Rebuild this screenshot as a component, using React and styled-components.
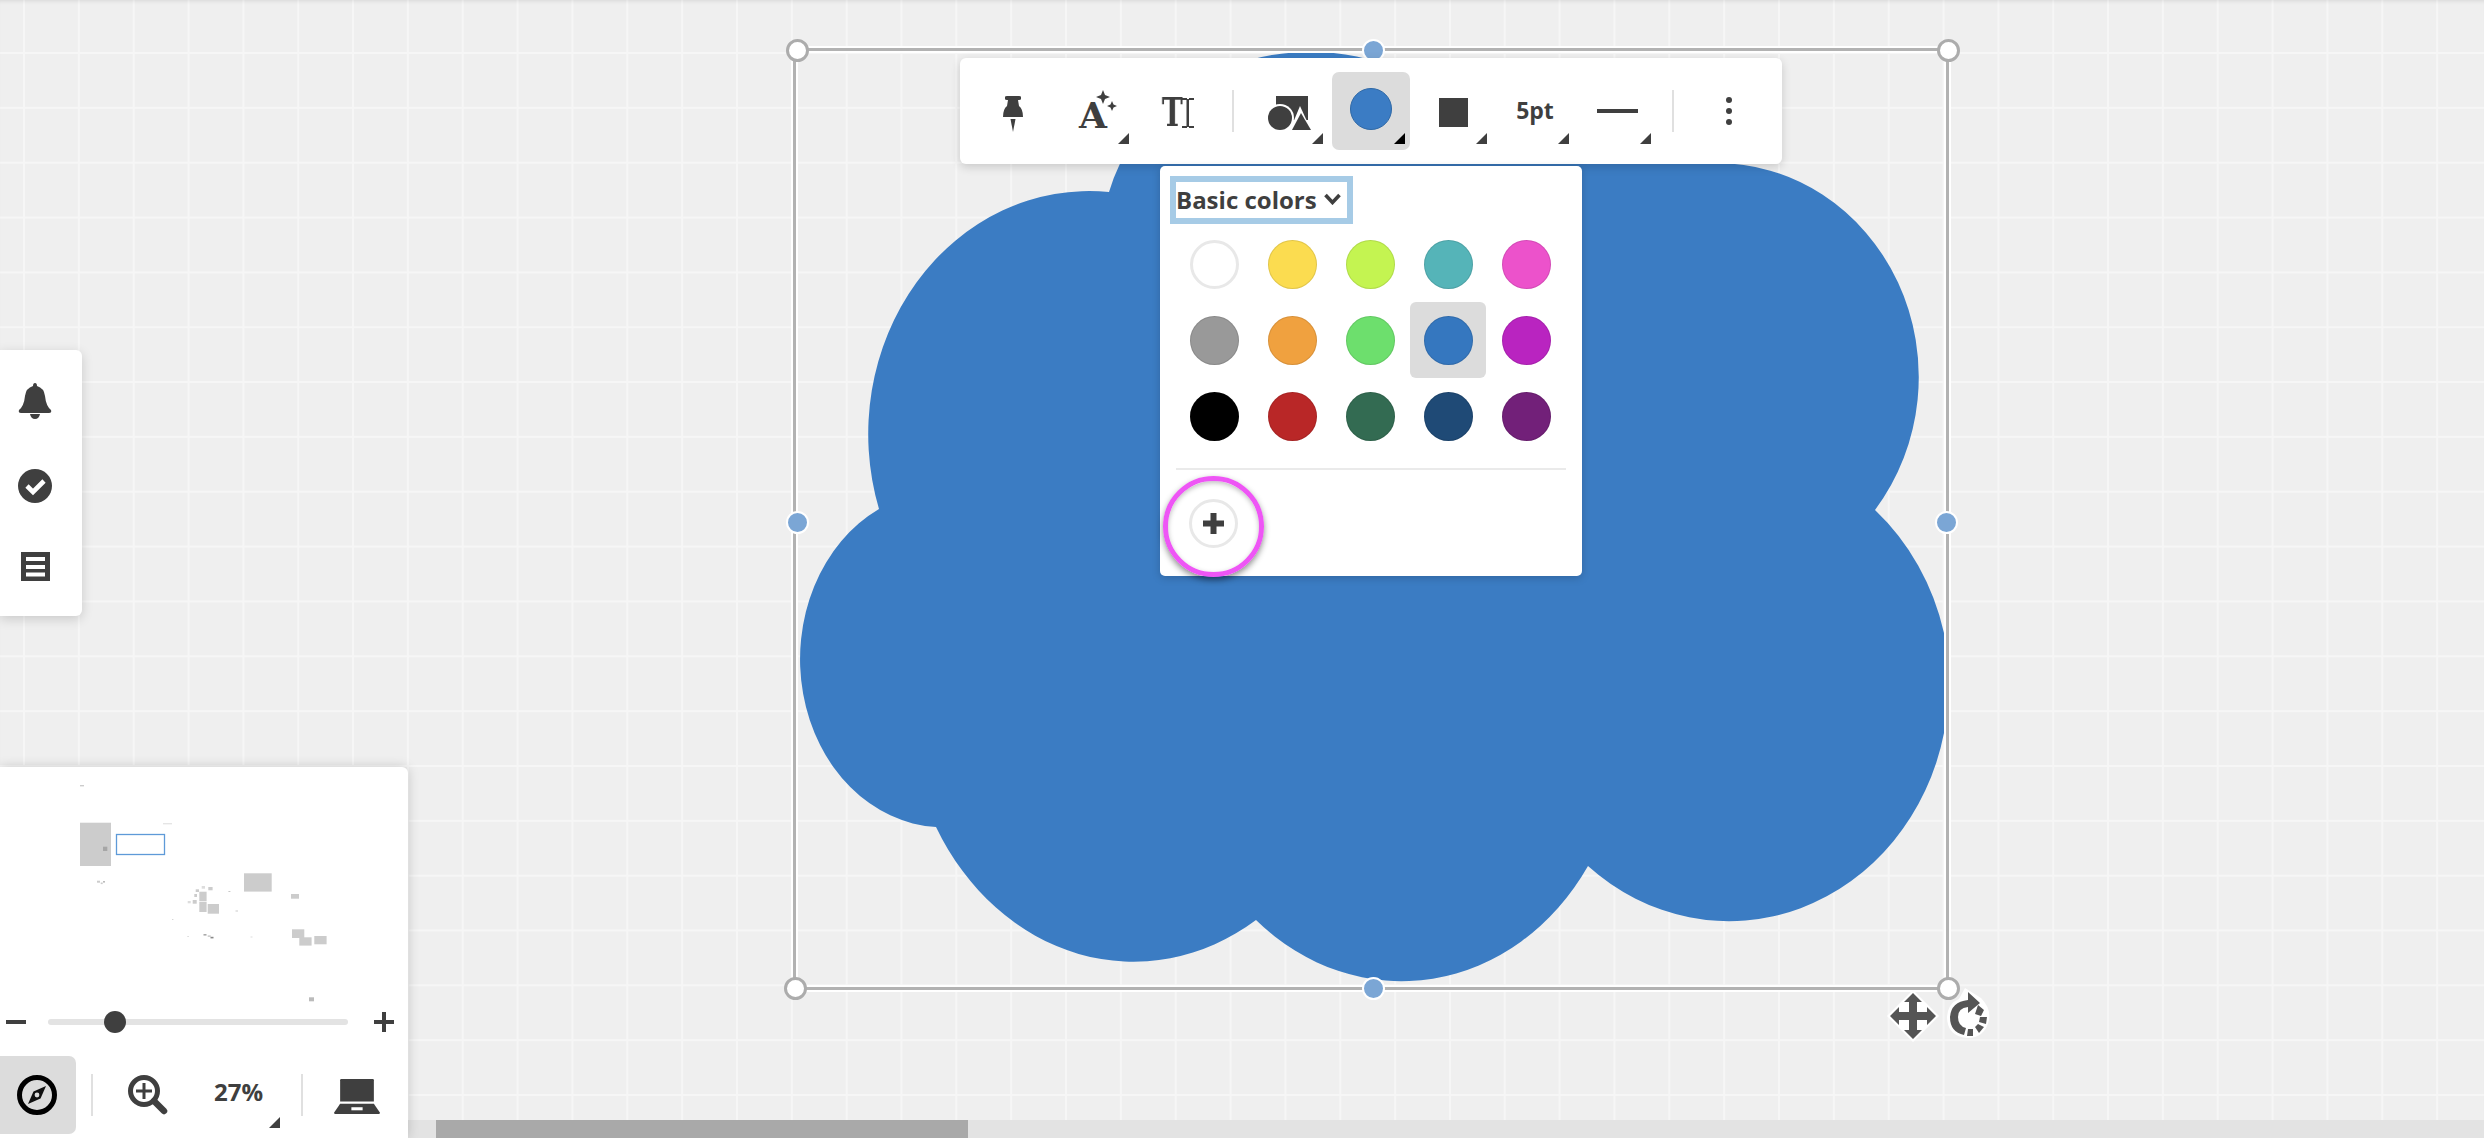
import React from 'react';
import styled, { createGlobalStyle } from 'styled-components';

const Global = createGlobalStyle`
  html, body { margin: 0; padding: 0; height: 100%; overflow: hidden; background: #efefef; }
  #root { height: 100%; }
  * { box-sizing: border-box; }
`;

const Page = styled.div`
  width: 2484px; height: 1138px; display: flex; flex-direction: column; overflow: hidden;
  font-family: "Open Sans", "Noto Sans", sans-serif; color: #3f3f3f;
`;
const Canvas = styled.main`
  position: relative; flex: 1; overflow: hidden; background-color: #efefef;
  background-image:
    linear-gradient(to right, #f6f6f6 1.6px, transparent 1.6px),
    linear-gradient(to bottom, #f6f6f6 1.6px, transparent 1.6px);
  background-size: 54.85px 54.85px;
  background-position: 23px 52px;
  box-shadow: inset 0 4px 4px -3px rgba(0,0,0,.1);
`;
const ScrollTrack = styled.div`
  height: 18px; flex: none; background: #e3e3e3; padding-left: 436px;
`;
const ScrollThumb = styled.div`
  width: 532px; height: 100%; background: #a9a9a9;
`;

const CloudArt = styled.svg`
  position: absolute; left: 0; top: 0; width: 2484px; height: 1120px;
`;
const SelectionFrame = styled.div`
  position: absolute; left: 793px; top: 48px; width: 1156px; height: 942px;
  border: 3px solid #b2b2b2;
  box-shadow: 0 0 0 2px #fff, inset 0 0 0 2px #fff;
`;
const CornerHandle = styled.div`
  position: absolute; width: 23px; height: 23px; margin: -11.5px 0 0 -11.5px; border-radius: 50%;
  background: #fff; border: 3px solid #acacac;
  left: ${p => p.$x}px; top: ${p => p.$y}px;
`;
const EdgeHandle = styled.div`
  position: absolute; width: 23px; height: 23px; margin: -11.5px 0 0 -11.5px; border-radius: 50%;
  background: #7ba6d5; border: 2.5px solid #fff;
  left: ${p => p.$x}px; top: ${p => p.$y}px;
`;
const FreeIcon = styled.svg`
  position: absolute; left: ${p => p.$x}px; top: ${p => p.$y}px;
`;

const Toolbar = styled.div`
  position: absolute; left: 960px; top: 58px; width: 822px; height: 106px;
  display: flex; align-items: center; padding-left: 14px;
  background: #fff; border-radius: 6px; box-shadow: 0 3px 10px rgba(0,0,0,.16);
`;
const ToolGroup = styled.div`
  display: flex; gap: 4px;
`;
const ToolButton = styled.div`
  position: relative; width: 78px; height: 78px; border-radius: 7px; flex: none;
  display: flex; align-items: center; justify-content: center;
  background: ${p => p.$active ? '#dcdcdc' : 'transparent'};
`;
const Corner = styled.span`
  position: absolute; right: ${p => p.$right ?? 5}px; bottom: ${p => p.$bottom ?? 6}px; width: 0; height: 0;
  border-style: solid; border-width: 0 0 11px 11px;
  border-color: transparent transparent ${p => p.$dark ? '#000' : '#3f3f3f'} transparent;
`;
const ToolSep = styled.div`
  width: 2px; height: 42px; background: #e0e0e0; flex: none; margin: 0 16px;
`;
const LetterA = styled.span`
  font-family: "DejaVu Serif", serif; font-weight: 700; font-size: 36px; line-height: 1;
  color: #3f3f3f; margin: 0 8px 0 0; transform: translate(2px, 4px);
`;
const Spark = styled.svg`
  position: absolute; left: 40px; top: 18px;
`;
const TextTool = styled.div`
  display: flex; align-items: center; margin-top: 3px;
`;
const LetterT = styled.span`
  font-family: "DejaVu Serif", serif; font-weight: 700; font-size: 39px; line-height: 1;
  color: #3f3f3f; display: inline-block; width: 20px; text-align: center; transform: scaleX(.72);
  will-change: transform;
`;
const FillDot = styled.div`
  width: 42px; height: 42px; border-radius: 50%; background: #3b7cc4; border: 1.5px solid #2e68a6;
  margin-top: -4px;
`;
const SquareIcon = styled.div`
  width: 29px; height: 29px; background: #3f3f3f; margin-top: 2px;
`;
const PtLabel = styled.span`
  font-size: 23px; font-weight: 700; color: #3f3f3f; margin-top: -2px;
`;
const LineIcon = styled.div`
  width: 41px; height: 4px; background: #3f3f3f; margin-top: 0;
`;
const MoreDots = styled.div`
  display: flex; flex-direction: column; gap: 5px;
`;
const MoreDot = styled.i`
  display: block; width: 6px; height: 6px; border-radius: 50%; background: #3f3f3f;
`;

const ColorPopup = styled.div`
  position: absolute; left: 1160px; top: 166px; width: 422px; height: 410px;
  padding: 10px 16px 0 10px; background: #fff; border-radius: 5px;
  box-shadow: 0 2px 8px rgba(0,0,0,.18);
  display: flex; flex-direction: column; align-items: flex-start;
`;
const PaletteSelect = styled.div`
  width: 183px; height: 48px; border: 6px solid #a6cbe6; display: flex; align-items: center; gap: 7px;
  padding: 0 0 2px 0; font-size: 24px; font-weight: 700; color: #3f3f3f; white-space: nowrap;
`;
const SwatchGrid = styled.div`
  display: grid; grid-template-columns: repeat(5, 76px); grid-auto-rows: 76px; column-gap: 2px;
  margin: 2px 0 0 6px;
`;
const SwatchCell = styled.div`
  display: flex; align-items: center; justify-content: center; border-radius: 6px;
  background: ${p => p.$selected ? '#dcdcdc' : 'transparent'};
`;
const Swatch = styled.div`
  width: 49px; height: 49px; border-radius: 50%; background: ${p => p.$color};
  border: ${p => p.$light ? '3px solid #e8e8e8' : '1px solid rgba(0,0,0,.1)'};
`;
const PopupDivider = styled.div`
  width: 390px; height: 2px; background: #eaeaea; margin: 14px 0 0 6px;
`;
const AddColor = styled.div`
  width: 49px; height: 49px; border-radius: 50%; border: 3px solid #e8e8e8; margin: 29px 0 0 19px;
  display: flex; align-items: center; justify-content: center; flex: none;
`;
const PinkRing = styled.div`
  position: absolute; left: 3px; top: 310px; width: 101px; height: 101px; border-radius: 50%;
  border: 5px solid #ee55f5; box-shadow: 0 3px 6px rgba(0,0,0,.45), inset 0 2px 5px rgba(0,0,0,.25);
`;

const SidePanel = styled.aside`
  position: absolute; left: 0; top: 350px; width: 82px; height: 266px; background: #fff;
  border-radius: 0 6px 6px 0; box-shadow: 0 3px 12px rgba(0,0,0,.16);
  display: flex; flex-direction: column; align-items: center; justify-content: space-between;
  padding: 33px 12px 35px 0;
`;

const MapPanel = styled.section`
  position: absolute; left: 0; top: 767px; width: 408px; height: 371px; background: #fff;
  border-radius: 0 6px 0 0; box-shadow: 0 0 12px rgba(0,0,0,.18); z-index: 2;
  display: flex; flex-direction: column;
`;
const MiniMap = styled.svg`
  display: block; width: 408px; height: 240px; flex: none;
`;
const SliderRow = styled.div`
  height: 30px; display: flex; align-items: center; padding: 0 14px 0 6px; gap: 22px; flex: none;
`;
const MinusMark = styled.div`
  width: 20px; height: 4px; background: #3f3f3f; flex: none;
`;
const SliderTrack = styled.div`
  position: relative; flex: none; width: 300px; height: 6px; border-radius: 3px; background: #e3e3e3;
`;
const SliderKnob = styled.div`
  position: absolute; left: ${p => p.$pos}px; top: -8px; width: 22px; height: 22px; border-radius: 50%; background: #3f3f3f;
`;
const PlusSlot = styled.div`
  display: flex; margin-left: 4px;
`;
const ViewRow = styled.div`
  display: flex; align-items: center; height: 78px; margin-top: 19px; flex: none;
`;
const CompassButton = styled.div`
  width: 76px; height: 78px; background: #dcdcdc; border-radius: 0 7px 7px 0; padding-right: 2px;
  display: flex; align-items: center; justify-content: center; flex: none;
`;
const ViewSep = styled.div`
  width: 2px; height: 42px; background: #e0e0e0; flex: none; margin-left: ${p => p.$ml}px;
`;
const ZoomSlot = styled.div`
  flex: none; margin-left: ${p => p.$ml}px; margin-top: ${p => p.$mt ?? 0}px; display: flex;
`;
const ZoomValue = styled.div`
  position: relative; margin-left: 46px; width: 66px; height: 60px; flex: none;
  font-size: 24px; font-weight: 700; color: #3f3f3f; line-height: 54px;
`;

const Plus = ({ size = 21, w = 6 }) => (
  <svg width={size} height={size} viewBox="0 0 20 20" fill="#3f3f3f">
    <rect x={10 - w * 10 / size} y="0" width={w * 20 / size} height="20" />
    <rect x="0" y={10 - w * 10 / size} width="20" height={w * 20 / size} />
  </svg>
);

const SWATCHES = [
  ['#ffffff', true], ['#fbdc50'], ['#c4f451'], ['#55b4b8'], ['#ec52cb'],
  ['#999999'], ['#f0a13f'], ['#6ddf6d'], ['#3577bf', false, true], ['#b924c0'],
  ['#000000'], ['#b92727'], ['#336b52'], ['#1f4a76'], ['#722079'],
];

const CLOUD = 'M1109 192 A208 188 0 0 1 1500 163 L1714 163 A202 214 0 0 1 1875 510 A220 238 0 0 1 1944 633 L1944 733 A220 238 0 0 1 1588 866 A222 251 0 0 1 1256 920 A226 262 0 0 1 936 827 A143 168 0 0 1 879 509 A221 243 0 0 1 1109 192 Z';

const MAP_RECTS = [
  [80, 822.7, 31, 43.3, '#cccccc'], [103, 846.7, 4.3, 4.3, '#a6a6a6'],
  [244, 873.3, 27.7, 18.3, '#cccccc'], [291, 894, 8, 4.7, '#cccccc'],
  [292, 929.3, 12.3, 8.7, '#cccccc'], [299.3, 937.3, 12.3, 8.3, '#cccccc'], [314.3, 936, 12.3, 8.3, '#cccccc'],
  [199.3, 891.7, 7.3, 9.3, '#cccccc'], [199.3, 901.7, 7.3, 10.3, '#cccccc'], [207.7, 904, 11.3, 9.7, '#cccccc'],
  [192.7, 900, 4, 3.7, '#cccccc'], [208.3, 887, 4.3, 3.3, '#cccccc'], [195.7, 889.3, 3.3, 2.7, '#cccccc'],
  [194.3, 894, 2.7, 3, '#cccccc'], [187.7, 901, 3, 2.3, '#dddddd'], [201.7, 886, 3.3, 2.7, '#dddddd'],
  [309, 997.3, 5, 4, '#bbbbbb'], [80, 785, 4, 1.4, '#cccccc'], [163, 823.5, 9, .7, '#cccccc'],
  [97, 880.7, 3, 2, '#cccccc'], [100.7, 882.5, 2, 1.6, '#cccccc'], [103, 881, 2, 1.6, '#bbbbbb'],
  [203.5, 934, 3, 1.6, '#aaaaaa'], [207.7, 935.5, 3, 1.2, '#bbbbbb'], [210.5, 936.8, 3, 1.6, '#888888'],
  [228.4, 891, 2, .8, '#bbbbbb'], [235.5, 910.5, 2.5, 1, '#cccccc'], [172, 919, 1.4, .8, '#cccccc'],
  [187.3, 936, 1.6, .7, '#cccccc'], [250.5, 936.5, 2, 1, '#dddddd'],
];

export default function App() {
  return (
    <Page>
      <Global />
      <Canvas>
        <CloudArt viewBox="0 0 2484 1120">
          <path d={CLOUD} fill="#3b7cc3" />
        </CloudArt>
        <SelectionFrame />
        <CornerHandle $x={797} $y={50} />
        <CornerHandle $x={1948} $y={50} />
        <CornerHandle $x={795} $y={988} />
        <CornerHandle $x={1948} $y={988} />
        <EdgeHandle $x={1373} $y={50} />
        <EdgeHandle $x={797} $y={522} />
        <EdgeHandle $x={1946} $y={522} />
        <EdgeHandle $x={1373} $y={988} />

        <FreeIcon $x={1886} $y={989} width="54" height="54" viewBox="0 0 54 54">
          <path d="M27 1 L53 27 L27 53 L1 27 Z" fill="#fff" />
          <path d="M27 4 L36 13 L31 13 L31 23 L41 23 L41 18 L50 27 L41 36 L41 31 L31 31 L31 41 L36 41 L27 50 L18 41 L23 41 L23 31 L13 31 L13 36 L4 27 L13 18 L13 23 L23 23 L23 13 L18 13 Z" fill="#555" />
        </FreeIcon>
        <FreeIcon $x={1945} $y={986} width="46" height="54" viewBox="0 0 46 54">
          <path d="M20 2 L36 12 Q46 22 44 34 Q40 52 22 52 Q2 50 2 31 Q3 17 14 13 Z" fill="#fff" />
          <path d="M23 6 L35 17 L23 27 L23 21 Q13 22 13 31 Q13 40 21 42 L19 49 Q5 46 5 31 Q6 16 23 14 Z" fill="#555" />
          <path d="M33 19 L39 24 L36 30 L30 28 Z M42 31 L41 38 L34 36 L35 31 Z M39 41 L34 47 L30 41 L33 38 Z M28 43 L28 50 L22 50 L23 43 Z" fill="#555" />
        </FreeIcon>

        <Toolbar>
          <ToolGroup>
            <ToolButton>
              <svg width="22" height="36" viewBox="0 0 22 36" fill="#3f3f3f" style={{ marginTop: 5 }}>
                <path d="M3 1 Q3 0 5 0 L17 0 Q19 0 19 1 L19 3 Q19 4 17 4 L16 4 L17 10 Q21 13 21 21 L1 21 Q1 13 5 10 L6 4 L5 4 Q3 4 3 3 Z" />
                <path d="M8.5 23 L13.5 23 L11 36 Z" />
              </svg>
            </ToolButton>
            <ToolButton>
              <LetterA>A</LetterA>
              <Spark width="26" height="30" viewBox="0 0 26 30" fill="#3f3f3f">
                <path d="M7 0 L9 5 L14 7 L9 9 L7 14 L5 9 L0 7 L5 5 Z" />
                <path d="M16 11 L17.5 14.5 L21 16 L17.5 17.5 L16 21 L14.5 17.5 L11 16 L14.5 14.5 Z" />
              </Spark>
              <Corner />
            </ToolButton>
            <ToolButton>
              <TextTool>
                <LetterT>T</LetterT>
                <svg width="14" height="30" viewBox="0 0 14 30" fill="#3f3f3f" style={{ marginLeft: 2 }}>
                  <rect x="5.5" y="1" width="2.5" height="28" />
                  <rect x="1" y="0" width="5" height="2" /><rect x="8" y="0" width="5" height="2" />
                  <rect x="1" y="28" width="5" height="2" /><rect x="8" y="28" width="5" height="2" />
                </svg>
              </TextTool>
            </ToolButton>
          </ToolGroup>
          <ToolSep />
          <ToolGroup>
            <ToolButton>
              <svg width="43" height="34" viewBox="0 0 43 34" style={{ marginTop: 3 }}>
                <rect x="8" y="0" width="32" height="24" fill="#3f3f3f" />
                <path d="M32 10 L22 34 L43 34 Z" fill="#fff" />
                <path d="M33 17 L24 34 L43 34 Z" fill="#3f3f3f" />
                <circle cx="12" cy="22" r="14" fill="#fff" />
                <circle cx="12" cy="22" r="12" fill="#3f3f3f" />
              </svg>
              <Corner />
            </ToolButton>
            <ToolButton $active>
              <FillDot />
              <Corner $dark />
            </ToolButton>
            <ToolButton>
              <SquareIcon />
              <Corner />
            </ToolButton>
            <ToolButton>
              <PtLabel>5pt</PtLabel>
              <Corner />
            </ToolButton>
            <ToolButton>
              <LineIcon />
              <Corner />
            </ToolButton>
          </ToolGroup>
          <ToolSep />
          <ToolButton>
            <MoreDots><MoreDot /><MoreDot /><MoreDot /></MoreDots>
          </ToolButton>
        </Toolbar>

        <ColorPopup>
          <PaletteSelect>
            Basic colors
            <svg width="17" height="12" viewBox="0 0 17 12" fill="none" stroke="#3f3f3f" strokeWidth="3.6">
              <path d="M1.5 2 L8.5 9.5 L15.5 2" />
            </svg>
          </PaletteSelect>
          <SwatchGrid>
            {SWATCHES.map(([color, light, selected]) => (
              <SwatchCell key={color} $selected={selected}>
                <Swatch $color={color} $light={light} />
              </SwatchCell>
            ))}
          </SwatchGrid>
          <PopupDivider />
          <AddColor><Plus size={21} w={6} /></AddColor>
          <PinkRing />
        </ColorPopup>

        <SidePanel>
          <svg width="34" height="36" viewBox="0 0 34 36" fill="#3f3f3f">
            <path d="M17 0 Q19 0 19 3 Q26 5 27 13 Q28 23 33 27 Q34 30 31 30 L3 30 Q0 30 1 27 Q6 23 7 13 Q8 5 15 3 Q15 0 17 0 Z" />
            <path d="M12 31 L22 31 Q21 36 17 36 Q13 36 12 31 Z" />
          </svg>
          <svg width="34" height="34" viewBox="0 0 34 34">
            <circle cx="17" cy="17" r="17" fill="#3f3f3f" />
            <path d="M9 17 L15 23 L26 12" fill="none" stroke="#fff" strokeWidth="4.6" />
          </svg>
          <svg width="29" height="29" viewBox="0 0 29 29">
            <rect width="29" height="29" fill="#3f3f3f" />
            <rect x="5" y="5" width="19" height="4" fill="#fff" />
            <rect x="5" y="13" width="19" height="4" fill="#fff" />
            <rect x="5" y="20.5" width="19" height="4" fill="#fff" />
          </svg>
        </SidePanel>
      </Canvas>
      <ScrollTrack><ScrollThumb /></ScrollTrack>

      <MapPanel>
        <MiniMap viewBox="0 767 408 240">
          {MAP_RECTS.map(([x, y, w, h, fill]) => <rect key={`${x}-${y}`} x={x} y={y} width={w} height={h} fill={fill} />)}
          <rect x="116.5" y="834.5" width="48" height="20" fill="#fff" stroke="#5e9ad8" strokeWidth="1.3" />
        </MiniMap>
        <SliderRow>
          <MinusMark />
          <SliderTrack><SliderKnob $pos={56} /></SliderTrack>
          <PlusSlot><Plus size={20} w={4} /></PlusSlot>
        </SliderRow>
        <ViewRow>
          <CompassButton>
            <svg width="40" height="40" viewBox="0 0 40 40">
              <circle cx="20" cy="20" r="17.5" fill="none" stroke="#000" strokeWidth="5" />
              <path d="M29 11 L23.5 23.5 L11 29 L16.5 16.5 Z" fill="#111" />
              <circle cx="20" cy="20" r="2.4" fill="#dcdcdc" />
            </svg>
          </CompassButton>
          <ViewSep $ml={15} />
          <ZoomSlot $ml={35}>
            <svg width="40" height="40" viewBox="0 0 40 40" fill="none" stroke="#3f3f3f">
              <circle cx="16" cy="16" r="13.5" strokeWidth="5" />
              <path d="M26 26 L36 36" strokeWidth="6.5" strokeLinecap="round" />
              <path d="M16 8 V24 M8 16 H24" strokeWidth="3" />
            </svg>
          </ZoomSlot>
          <ZoomValue>27%<Corner $right={0} $bottom={-3} /></ZoomValue>
          <ViewSep $ml={21} />
          <ZoomSlot $ml={31} $mt={2}>
            <svg width="46" height="35" viewBox="0 0 45 34" fill="#3f3f3f">
              <path d="M6 1 Q6 0 7 0 L38 0 Q39 0 39 1 L39 22 L6 22 Z" />
              <path d="M6 24 L39 24 L45 33 Q45 34 44 34 L1 34 Q0 34 0 33 Z" />
              <rect x="17" y="27.5" width="11" height="3" fill="#fff" />
            </svg>
          </ZoomSlot>
        </ViewRow>
      </MapPanel>
    </Page>
  );
}
